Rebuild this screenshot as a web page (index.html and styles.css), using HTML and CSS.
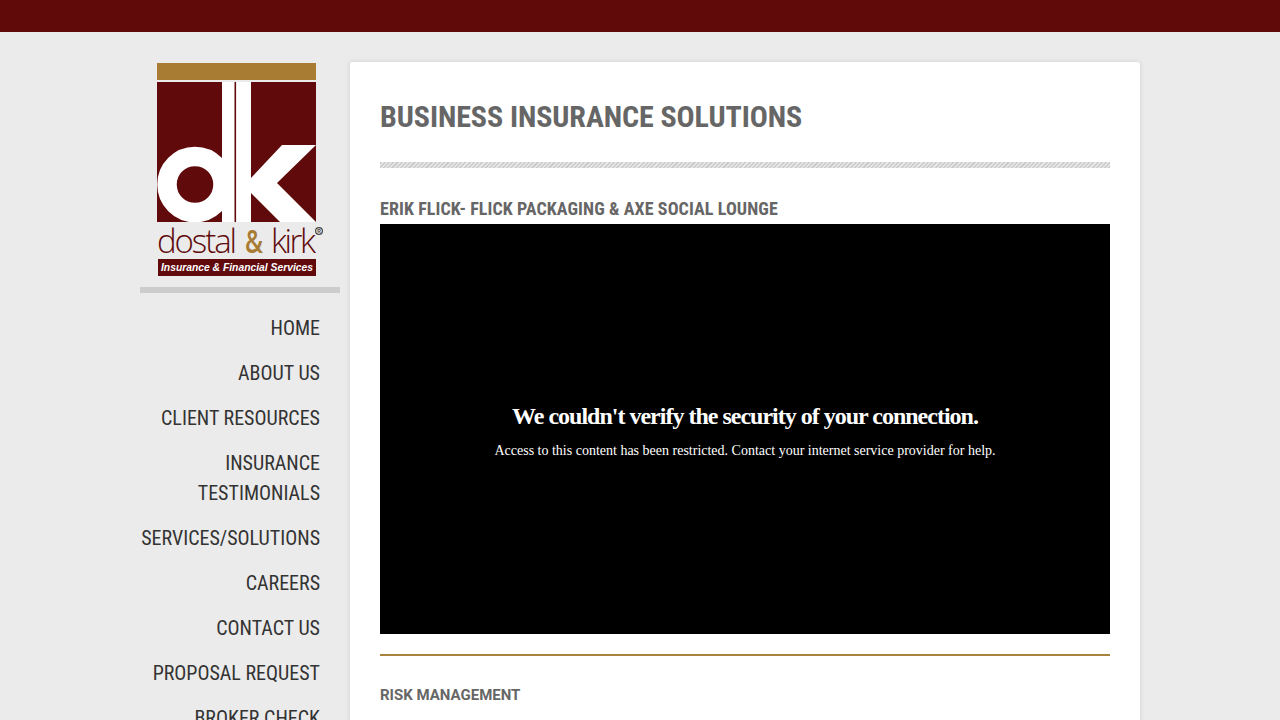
FILE: index.html
```html
<!DOCTYPE html>
<html lang="en">
<head>
    <meta charset="UTF-8">
    <meta name="viewport" content="width=device-width, initial-scale=1.0">
    <title>Business Insurance Solutions - Dostal & Kirk</title>
    <link rel="stylesheet" href="styles.css">
</head>
<body>
    <div class="top-bar"></div>

    <div class="wrapper">
        <div class="sidebar">
            <div class="logo">
                <svg class="logo-svg" width="200" height="225" viewBox="140 62 200 225" role="img" aria-label="Dostal and Kirk logo">
                    <rect x="157" y="63" width="159" height="17" fill="#a87c33"/>
                    <rect x="157" y="82" width="159" height="140" fill="#600a0c"/>
                    <circle cx="195" cy="184.5" r="28" fill="none" stroke="#fff" stroke-width="19.5"/>
                    <rect x="222" y="82" width="29" height="140" fill="#fff"/>
                    <rect x="234.5" y="82" width="1.6" height="140" fill="#600a0c"/>
                    <polygon points="251,178 282,145 316,145 277,183 316,222 280,222 251,193" fill="#fff"/>
                    <text class="logo-word" x="157" y="253" textLength="80" lengthAdjust="spacing">dostal</text>
                    <text class="logo-word logo-amp" x="245" y="253" textLength="18" lengthAdjust="spacingAndGlyphs">&amp;</text>
                    <text class="logo-word" x="271" y="253" textLength="45" lengthAdjust="spacing">kirk</text>
                    <circle cx="319" cy="231" r="3.4" fill="none" stroke="#444" stroke-width="1.2"/>
                    <text class="logo-reg" x="319" y="233">R</text>
                    <rect x="158" y="259" width="158" height="17" fill="#600a0c"/>
                    <text class="logo-tag" x="161" y="270.5" textLength="152" lengthAdjust="spacingAndGlyphs">Insurance &amp; Financial Services</text>
                </svg>
            </div>
            <ul class="nav">
                <li><a href="#">HOME</a></li>
                <li><a href="#">ABOUT US</a></li>
                <li><a href="#">CLIENT RESOURCES</a></li>
                <li><a href="#">INSURANCE TESTIMONIALS</a></li>
                <li><a href="#">SERVICES/SOLUTIONS</a></li>
                <li><a href="#">CAREERS</a></li>
                <li><a href="#">CONTACT US</a></li>
                <li><a href="#">PROPOSAL REQUEST</a></li>
                <li><a href="#">BROKER CHECK</a></li>
            </ul>
        </div>

        <div class="content">
            <h1 class="page-title">BUSINESS INSURANCE SOLUTIONS</h1>
            <div class="hatch-rule"></div>

            <h3 class="video-title">ERIK FLICK- FLICK PACKAGING &amp; AXE SOCIAL LOUNGE</h3>
            <div class="video-box">
                <div class="video-msg">We couldn't verify the security of your connection.</div>
                <div class="video-sub">Access to this content has been restricted. Contact your internet service provider for help.</div>
            </div>
            <div class="gold-rule"></div>

            <h4 class="section-title">RISK MANAGEMENT</h4>
        </div>
    </div>
</body>
</html>
```

FILE: styles.css
```css
body {
    font-family: "Roboto Condensed", Roboto, sans-serif;
    background-color: #ebebeb;
    margin: 0;
    height: 720px;
    overflow: hidden;
}
.top-bar {
    height: 32px;
    background-color: #600a0a;
}
.wrapper {
    width: 1000px;
    margin: 30px auto 0;
    display: flex;
    gap: 10px;
    align-items: flex-start;
}
.sidebar {
    width: 200px;
    flex-shrink: 0;
}
.logo {
    height: 225px;
    border-bottom: 6px solid #ccc;
}
.logo-svg {
    display: block;
}
.logo-word {
    font-family: "Open Sans", sans-serif;
    font-weight: 300;
    font-size: 33px;
    fill: #600a0c;
}
.logo-amp {
    fill: #a87c33;
    font-weight: 600;
}
.logo-reg {
    font-family: "Liberation Sans", sans-serif;
    font-size: 5px;
    font-weight: bold;
    fill: #444;
    text-anchor: middle;
}
.logo-tag {
    font-family: "Liberation Sans", sans-serif;
    font-size: 10px;
    font-weight: bold;
    font-style: italic;
    fill: #fff;
}
.nav {
    list-style: none;
    margin: 20px 0 0;
    padding: 0 20px 0 0;
    text-align: right;
}
.nav li {
    margin-bottom: 15px;
}
.nav a {
    color: #333;
    font-size: 20px;
    line-height: 30px;
    text-decoration: none;
    font-stretch: condensed;
    display: block;
}
.content {
    width: 790px;
    height: 900px;
    box-sizing: border-box;
    padding: 30px;
    background: white;
    border-radius: 3px;
    box-shadow: 0 0 5px rgba(0, 0, 0, 0.12);
}
.page-title {
    margin: 0;
    color: #666;
    font-size: 30px;
    line-height: 50px;
    font-weight: bold;
    font-stretch: condensed;
    letter-spacing: -0.08px;
}
.hatch-rule {
    height: 6px;
    margin-top: 20px;
    background: repeating-linear-gradient(135deg, #ccc 0, #ccc 1.5px, #e6e6e6 1.5px, #e6e6e6 3px);
}
.video-title {
    margin: 28px 0 0;
    padding-bottom: 2px;
    color: #666;
    font-size: 18px;
    line-height: 26px;
    font-weight: bold;
    font-stretch: condensed;
    letter-spacing: 0.08px;
}
.video-box {
    height: 410px;
    background: black;
    color: white;
    font-family: "Liberation Serif", serif;
    text-align: center;
    display: flex;
    flex-direction: column;
    justify-content: center;
    padding-top: 3px;
    box-sizing: border-box;
}
.video-msg {
    font-size: 24px;
    font-weight: bold;
    line-height: 28px;
    letter-spacing: -1px;
}
.video-sub {
    font-size: 14px;
    line-height: 18px;
    margin-top: 12px;
}
.gold-rule {
    height: 2px;
    margin-top: 20px;
    background: #a9823d;
}
.section-title {
    margin: 29px 0 0;
    color: #666;
    font-family: Roboto, sans-serif;
    font-size: 15px;
    line-height: 20px;
    font-weight: bold;
}
```
